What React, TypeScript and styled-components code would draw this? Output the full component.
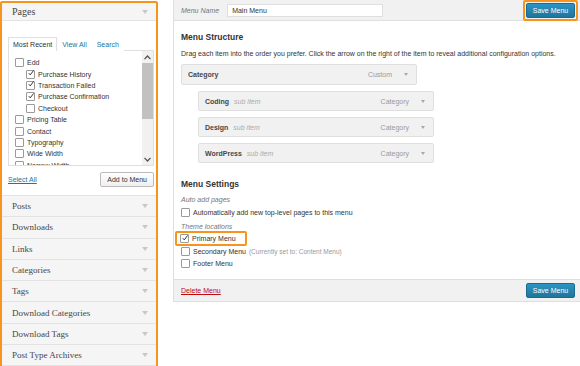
import React from 'react';
import styled, { createGlobalStyle } from 'styled-components';

const GlobalStyle = createGlobalStyle`
	body {
		margin: 0;
		background: #ffffff;
		font-family: 'Liberation Sans', Arial, sans-serif;
		color: #333;
	}
`;

const Page = styled.div`
	display: flex;
	align-items: flex-start;
	gap: 15px;
	width: 580px;
	height: 366px;
	overflow: hidden;
`;

const Highlight = styled.div`
	border: 2px solid #f7941d;
	border-radius: 2px;
`;

const SideColumn = styled(Highlight)`
	width: 154px;
	height: 363px;
	margin-top: 1px;
	display: flex;
	flex-direction: column;
	overflow: hidden;
	flex-shrink: 0;
`;

const SectionHead = styled.div<{ open?: boolean }>`
	display: flex;
	align-items: center;
	justify-content: space-between;
	height: ${p => (p.open ? '17px' : '20.3px')};
	padding: 0 8px 0 10px;
	background: #f5f5f5;
	border-bottom: 1px solid #e3e3e3;
	font-family: 'Liberation Serif', 'Times New Roman', serif;
	font-size: ${p => (p.open ? '10px' : '9px')};
	color: #464646;
	flex-shrink: 0;
`;

const Arrow = styled.span<{ dark?: boolean }>`
	width: 0;
	height: 0;
	border-left: ${p => (p.dark ? '2.5px' : '3px')} solid transparent;
	border-right: ${p => (p.dark ? '2.5px' : '3px')} solid transparent;
	border-top: ${p => (p.dark ? '3px' : '4px')} solid ${p => (p.dark ? '#a8a8a8' : '#c8c8c8')};
`;

const SectionBody = styled.div`
	background: #fff;
	padding: 16px 2px 8px 6px;
	border-bottom: 1px solid #e3e3e3;
`;

const Tabs = styled.div`
	display: flex;
	align-items: flex-end;
	font-size: 7px;
`;

const Tab = styled.span<{ active?: boolean }>`
	padding: 3px 4px 3px;
	color: ${p => (p.active ? '#333' : '#21759b')};
	border: 1px solid ${p => (p.active ? '#dfdfdf' : 'transparent')};
	border-bottom: none;
	background: #fff;
	margin-bottom: -1px;
	position: relative;
	z-index: 1;
`;

const ListBox = styled.div`
	display: flex;
	border: 1px solid #dfdfdf;
	height: 114px;
	overflow: hidden;
`;

const ListItems = styled.div`
	flex: 1;
	padding: 6px 0 0 6px;
	display: flex;
	flex-direction: column;
`;

const ListItem = styled.label<{ indent?: boolean }>`
	display: flex;
	align-items: center;
	gap: 3px;
	height: 11.4px;
	font-size: 7px;
	color: #333;
	padding-left: ${p => (p.indent ? '11px' : '0')};
	flex-shrink: 0;
	white-space: nowrap;
`;

const Box = styled.span`
	width: 7px;
	height: 7px;
	border: 1px solid #9a9a9a;
	background: #fff;
	display: inline-flex;
	align-items: center;
	justify-content: center;
	flex-shrink: 0;
	border-radius: 1px;
`;

const ScrollTrack = styled.div`
	width: 11px;
	display: flex;
	flex-direction: column;
	align-items: center;
	background: #f1f1f1;
`;

const ScrollArrow = styled.div`
	height: 12px;
	display: flex;
	align-items: center;
	justify-content: center;
`;

const ScrollThumb = styled.div`
	width: 11px;
	height: 56px;
	background: #c1c1c1;
`;

const ScrollRest = styled.div`
	flex: 1;
`;

const BoxFooter = styled.div`
	display: flex;
	justify-content: space-between;
	align-items: center;
	margin-top: 6px;
`;

const Link = styled.a<{ danger?: boolean }>`
	font-size: 7px;
	color: ${p => (p.danger ? '#bc0b0b' : '#21759b')};
	text-decoration: underline;
`;

const GrayButton = styled.button`
	font-family: 'Liberation Sans', Arial, sans-serif;
	font-size: 7px;
	color: #333;
	background: linear-gradient(#fefefe, #f0f0f0);
	border: 1px solid #bbb;
	border-radius: 2px;
	padding: 0 6px;
	height: 15px;
	white-space: nowrap;
`;

const BlueButton = styled.button`
	font-family: 'Liberation Sans', Arial, sans-serif;
	font-size: 7px;
	color: #fff;
	background: linear-gradient(#2a95c5, #21759b);
	border: 1px solid #1e6a8d;
	border-radius: 2px;
	padding: 0;
	height: 15px;
	width: 49px;
	white-space: nowrap;
`;

const MenuPanel = styled.div`
	width: 406px;
	border: 1px solid #dfdfdf;
	border-top: none;
	flex-shrink: 0;
`;

const PanelHeader = styled.div`
	display: flex;
	align-items: center;
	justify-content: space-between;
	height: 20px;
	padding: 0 2px 0 7px;
	background: #f1f1f1;
	border-bottom: 1px solid #dfdfdf;
`;

const NameField = styled.div`
	display: flex;
	align-items: center;
	gap: 8px;
`;

const FieldLabel = styled.span`
	font-size: 7px;
	font-style: italic;
	color: #777;
`;

const TextInput = styled.div`
	width: 150px;
	height: 11px;
	background: #fff;
	border: 1px solid #dfdfdf;
	font-size: 7px;
	padding-left: 4px;
	display: flex;
	align-items: center;
	color: #333;
`;

const SaveHighlight = styled(Highlight)`
	padding: 1px;
	display: flex;
`;

const PanelBody = styled.div`
	padding: 11px 7px 9px;
	background: #fff;
`;

const Title = styled.h3`
	margin: 0;
	font-size: 8.5px;
	line-height: 10px;
	font-weight: bold;
	color: #333;
`;

const Description = styled.p`
	margin: 8px 0 7px;
	font-size: 7px;
	color: #333;
`;

const MenuItems = styled.div`
	display: flex;
	flex-direction: column;
	gap: 6px;
	margin-bottom: 16px;
`;

const MenuItem = styled.div<{ sub?: boolean }>`
	display: flex;
	align-items: center;
	width: 236px;
	margin-left: ${p => (p.sub ? '17px' : '0')};
	height: ${p => (p.sub ? '20px' : '21px')};
	padding: 0 8px 0 6px;
	box-sizing: border-box;
	background: #f1f1f1;
	border: 1px solid #dfdfdf;
	border-radius: 2px;
	font-size: 7px;
	gap: 5px;
`;

const ItemTitle = styled.span`
	font-weight: bold;
	color: #464646;
`;

const ItemNote = styled.span`
	font-style: italic;
	color: #aaa;
`;

const ItemType = styled.span`
	margin-left: auto;
	color: #999;
	margin-right: 7px;
`;

const SubLabel = styled.div<{ first?: boolean }>`
	font-size: 7px;
	line-height: 9px;
	font-style: italic;
	color: #777;
	margin: ${p => (p.first ? '6px' : '3px')} 0 2px;
`;

const CheckRow = styled.label`
	display: flex;
	align-items: center;
	gap: 3px;
	height: 12.5px;
	font-size: 7px;
	color: #333;
	white-space: nowrap;
`;

const Hint = styled.span`
	color: #999;
	font-size: 6.5px;
`;

const PrimaryHighlight = styled(Highlight)`
	width: 65px;
	height: 11px;
	margin-left: -6px;
	padding-left: 3px;
	display: flex;
	align-items: center;
	gap: 3px;
`;

const PanelFooter = styled.div`
	display: flex;
	align-items: center;
	justify-content: space-between;
	height: 21px;
	padding: 0 5px 0 7px;
	background: #f1f1f1;
	border-top: 1px solid #dfdfdf;
`;

const Check = ({ checked }: { checked?: boolean }) => (
	<Box>
		{checked && (
			<svg width="8" height="8" viewBox="0 0 8 8" style={{ marginTop: -2, marginLeft: 1 }}>
				<path d="M1 4.2 L3 6.5 L7.5 0.5" fill="none" stroke="#333" strokeWidth="1.3" />
			</svg>
		)}
	</Box>
);

const pages = [
	{ name: 'Edd' },
	{ name: 'Purchase History', indent: true, checked: true },
	{ name: 'Transaction Failed', indent: true, checked: true },
	{ name: 'Purchase Confirmation', indent: true, checked: true },
	{ name: 'Checkout', indent: true },
	{ name: 'Pricing Table' },
	{ name: 'Contact' },
	{ name: 'Typography' },
	{ name: 'Wide Width' },
	{ name: 'Narrow Width' },
];

const sections = ['Posts', 'Downloads', 'Links', 'Categories', 'Tags', 'Download Categories', 'Download Tags', 'Post Type Archives'];

const items = [
	{ title: 'Coding' },
	{ title: 'Design' },
	{ title: 'WordPress' },
];

function App() {
	return (
		<Page>
			<GlobalStyle />
			<SideColumn>
				<SectionHead open>
					Pages
					<Arrow />
				</SectionHead>
				<SectionBody>
					<Tabs>
						<Tab active>Most Recent</Tab>
						<Tab>View All</Tab>
						<Tab>Search</Tab>
					</Tabs>
					<ListBox>
						<ListItems>
							{pages.map(p => (
								<ListItem key={p.name} indent={p.indent}>
									<Check checked={p.checked} />
									{p.name}
								</ListItem>
							))}
						</ListItems>
						<ScrollTrack>
							<ScrollArrow>
								<svg width="7" height="5" viewBox="0 0 7 5">
									<path d="M0.5 4.2 L3.5 1 L6.5 4.2" fill="none" stroke="#505050" strokeWidth="1.2" />
								</svg>
							</ScrollArrow>
							<ScrollThumb />
							<ScrollRest />
							<ScrollArrow>
								<svg width="7" height="5" viewBox="0 0 7 5">
									<path d="M0.5 0.8 L3.5 4 L6.5 0.8" fill="none" stroke="#505050" strokeWidth="1.2" />
								</svg>
							</ScrollArrow>
						</ScrollTrack>
					</ListBox>
					<BoxFooter>
						<Link>Select All</Link>
						<GrayButton>Add to Menu</GrayButton>
					</BoxFooter>
				</SectionBody>
				{sections.map(s => (
					<SectionHead key={s}>
						{s}
						<Arrow />
					</SectionHead>
				))}
			</SideColumn>
			<MenuPanel>
				<PanelHeader>
					<NameField>
						<FieldLabel>Menu Name</FieldLabel>
						<TextInput>Main Menu</TextInput>
					</NameField>
					<SaveHighlight>
						<BlueButton>Save Menu</BlueButton>
					</SaveHighlight>
				</PanelHeader>
				<PanelBody>
					<Title>Menu Structure</Title>
					<Description>
						Drag each item into the order you prefer. Click the arrow on the right of the item to reveal additional configuration options.
					</Description>
					<MenuItems>
						<MenuItem>
							<ItemTitle>Category</ItemTitle>
							<ItemType>Custom</ItemType>
							<Arrow dark />
						</MenuItem>
						{items.map(i => (
							<MenuItem sub key={i.title}>
								<ItemTitle>{i.title}</ItemTitle>
								<ItemNote>sub item</ItemNote>
								<ItemType>Category</ItemType>
								<Arrow dark />
							</MenuItem>
						))}
					</MenuItems>
					<Title>Menu Settings</Title>
					<SubLabel first>Auto add pages</SubLabel>
					<CheckRow>
						<Check />
						Automatically add new top-level pages to this menu
					</CheckRow>
					<SubLabel>Theme locations</SubLabel>
					<CheckRow>
						<PrimaryHighlight>
							<Check checked />
							Primary Menu
						</PrimaryHighlight>
					</CheckRow>
					<CheckRow>
						<Check />
						Secondary Menu <Hint>(Currently set to: Content Menu)</Hint>
					</CheckRow>
					<CheckRow>
						<Check />
						Footer Menu
					</CheckRow>
				</PanelBody>
				<PanelFooter>
					<Link danger>Delete Menu</Link>
					<BlueButton>Save Menu</BlueButton>
				</PanelFooter>
			</MenuPanel>
		</Page>
	);
}

export default App;
